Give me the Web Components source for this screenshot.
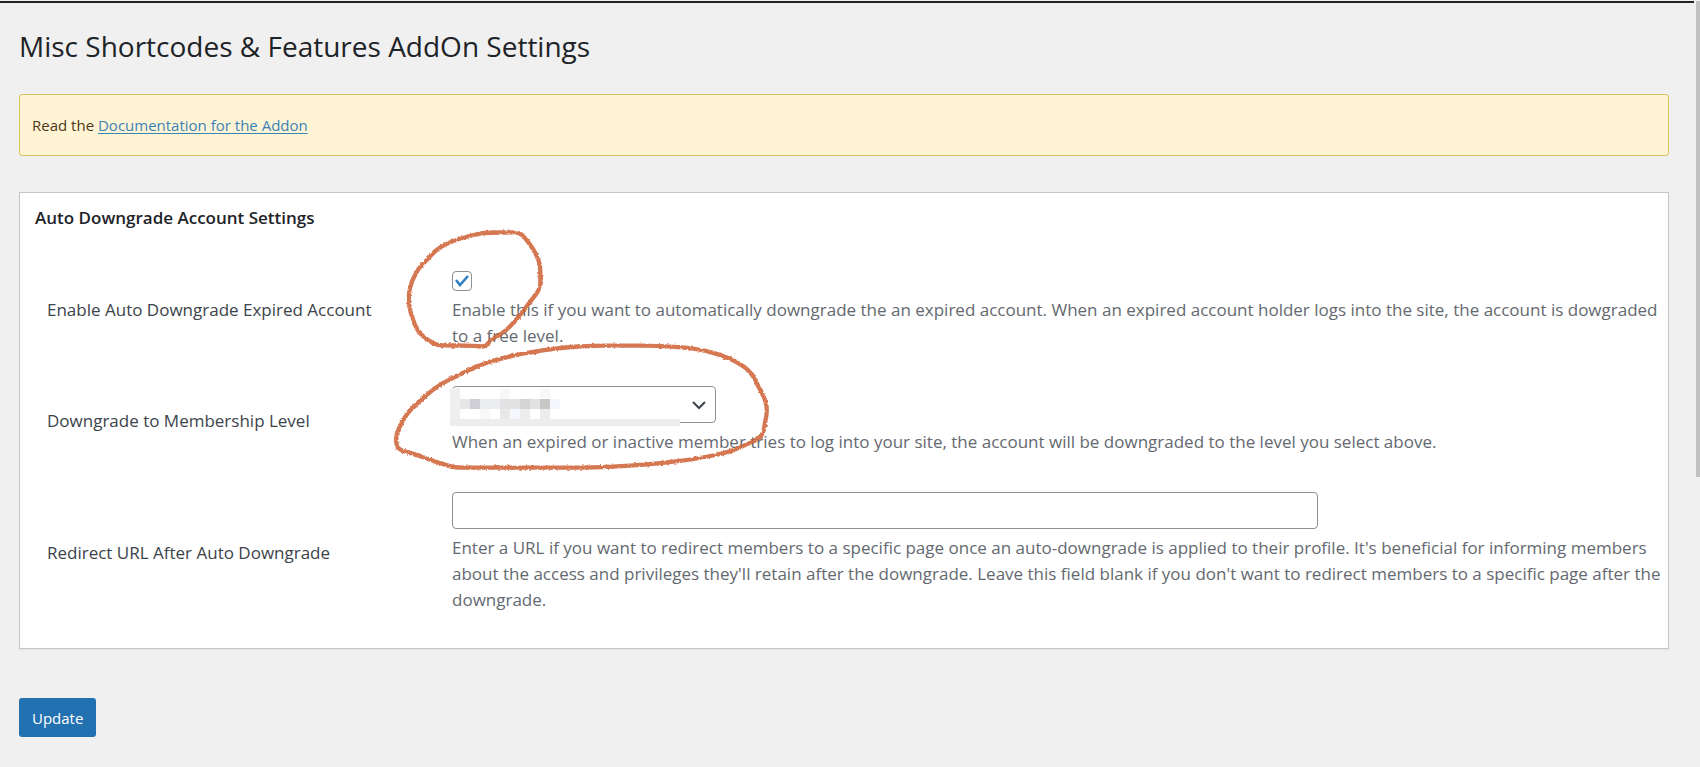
<!DOCTYPE html>
<html lang="en">
<head>
<meta charset="utf-8">
<title>Misc Shortcodes &amp; Features AddOn Settings</title>
<style>
body { margin: 0; background: #f0f0f0; font-family: "Open Sans", "Noto Sans", sans-serif; font-size: 17px; line-height: 26px; color: #3c434a; }
</style>
</head>
<body>
<settings-page heading="Misc Shortcodes &amp; Features AddOn Settings">
  <notice-bar>Read the <doc-link href="#documentation">Documentation for the Addon</doc-link></notice-bar>
  <settings-panel heading="Auto Downgrade Account Settings">
    <setting-row kind="checkbox" label="Enable Auto Downgrade Expired Account">Enable this if you want to automatically downgrade the an expired account. When an expired account holder logs into the site, the account is dowgraded to a free level.</setting-row>
    <setting-row kind="select" label="Downgrade to Membership Level">When an expired or inactive member tries to log into your site, the account will be downgraded to the level you select above.</setting-row>
    <setting-row kind="text" label="Redirect URL After Auto Downgrade">Enter a URL if you want to redirect members to a specific page once an auto-downgrade is applied to their profile. It's beneficial for informing members about the access and privileges they'll retain after the downgrade. Leave this field blank if you don't want to redirect members to a specific page after the downgrade.</setting-row>
  </settings-panel>
  <update-button slot="actions">Update</update-button>
</settings-page>
<script>
class BaseElement extends HTMLElement {
  connectedCallback() {
    if (!this.shadowRoot) this.attachShadow({ mode: "open" }).innerHTML = this.render();
  }
  attr(name) { return (this.getAttribute(name) || "").replace(/&/g, "&amp;").replace(/</g, "&lt;"); }
}

customElements.define("settings-page", class extends BaseElement {
  render() {
    return `<style>
      :host { display: block; position: relative; }
      .topbar { height: 2px; margin: 1px 6px 0 0; background: #1d2327; }
      .thumb { position: absolute; right: 0; top: 0; width: 4px; height: 476px; background: #c1c1c1; }
      main { padding: 25px 31px 30px 19px; }
      h1 { margin: 0 0 30px; font-size: 28px; line-height: 36px; font-weight: 400; color: #1d2327; }
      .actions { margin-top: 49px; }
    </style>
    <div class="topbar"></div><div class="thumb"></div>
    <main><h1>${this.attr("heading")}</h1><slot></slot><div class="actions"><slot name="actions"></slot></div></main>`;
  }
});

customElements.define("notice-bar", class extends BaseElement {
  render() {
    return `<style>
      :host { display: block; box-sizing: border-box; padding: 18px 12px; margin-bottom: 36px; background: #fff5d5; border: 1px solid #dcc05c; border-radius: 3px; font-size: 15px; line-height: 24px; color: #50371a; }
    </style><slot></slot>`;
  }
});

customElements.define("doc-link", class extends BaseElement {
  render() {
    return `<style>a { color: #3b82b8; text-underline-offset: 2px; }</style><a href="${this.attr("href")}"><slot></slot></a>`;
  }
});

customElements.define("settings-panel", class extends BaseElement {
  render() {
    return `<style>
      :host { display: block; background: #fff; border: 1px solid #c3c4c7; box-shadow: 0 1px 1px #0000000a; padding: 12px 0 35px; }
      h2 { margin: 0 15px 40px; font-size: 17px; line-height: 26px; font-weight: 600; color: #1d2327; }
      .rows { display: flex; flex-direction: column; gap: 37px; }
    </style><h2>${this.attr("heading")}</h2><div class="rows"><slot></slot></div>`;
  }
});

// Closed curve through the midpoints of the given points, as one brush stroke.
function ring(style, width, height, viewBox, points) {
  const p = points.split(" ").map(s => s.split(",").map(Number));
  const mid = (a, b) => `${(a[0] + b[0]) / 2} ${(a[1] + b[1]) / 2}`;
  let d = `M${mid(p[p.length - 1], p[0])}`;
  p.forEach((pt, i) => { d += `Q${pt[0]} ${pt[1]} ${mid(pt, p[(i + 1) % p.length])}`; });
  return `<svg class="ring" aria-hidden="true" style="${style}" width="${width}" height="${height}" viewBox="${viewBox}">
    <filter id="brush" x="-5%" y="-5%" width="110%" height="110%"><feTurbulence type="fractalNoise" baseFrequency=".12" numOctaves="2" seed="4"/><feDisplacementMap in="SourceGraphic" scale="9" xChannelSelector="R" yChannelSelector="G"/></filter>
    <path d="${d}z" filter="url(#brush)"/></svg>`;
}

customElements.define("setting-row", class extends BaseElement {
  control() {
    const kind = this.getAttribute("kind");
    if (kind === "checkbox") return `<input id="field" type="checkbox" checked aria-describedby="help">` +
      ring("left:-47px;top:-43px", 140, 122, "75 28 420 366", "420,41 385,41 330,42 300,44 262,54 215,68 170,91 142,123 118,146 104,170 89,205 86,240 88,265 98,302 112,335 130,354 150,368 172,380 205,380 260,381 300,382 316,384 335,361 367,345 397,317 425,283 452,247 481,210 481,175 481,138 467,103 445,70");
    if (kind === "select") return `<div class="select"><select id="field" aria-describedby="help"><option></option></select>
      <svg class="chevron" width="14" height="10" viewBox="0 0 14 10"><path d="M1 2l6 6 6-6"/></svg>
      <svg class="mosaic" width="230" height="38" viewBox="0 0 230 38" shape-rendering="crispEdges">
        <path fill="#fff" d="M10 4h110v27H10z"/><path fill="#efefef" d="M0 0h10v38H0z"/><path fill="#ededee" d="M0 31h230v7H0z"/>
        <path fill="#e7e6e6" d="M10 11h10v10H10z"/><path fill="#cfced6" d="M20 11h10v10H20z"/><path fill="#ecedf0" d="M30 11h20v10H30z"/>
        <path fill="#e2e2e3" d="M50 11h20v10H50zM80 11h10v10H80z"/><path fill="#d4d4d4" d="M70 11h10v10H70z"/><path fill="#c6c6c6" d="M90 11h10v10H90z"/><path fill="#f4f8fd" d="M100 11h10v10h-10zM60 21h10v10H60z"/>
        <path fill="#f8f8f8" d="M50 1h10v10H50zM90 1h10v10H90zM30 21h10v10H30z"/><path fill="#e8e8e8" d="M50 21h10v10H50z"/><path fill="#ececec" d="M70 21h10v10H70zM90 21h10v10H90z"/>
      </svg></div>` +
      ring("left:-60px;top:-44px", 378, 130, "35 368 1134 390", "230,745 205,740 145,720 95,702 55,692 46,668 50,637 78,585 105,558 165,503 235,466 315,430 385,412 445,399 550,384 640,379 720,379 840,379 950,388 1020,406 1070,427 1112,458 1135,503 1155,540 1161,575 1153,615 1147,650 1110,670 1050,697 960,717 850,731 750,739 640,745 500,745 400,745 300,745");
    return `<input id="field" type="text" aria-describedby="help">`;
  }
  render() {
    return `<style>
      :host { display: grid; grid-template-columns: 405px minmax(0, 1fr); align-items: center; padding: 0 4px 0 27px; }
      .cell { position: relative; }
      p { margin: 0; padding-top: 6px; color: #646970; }
      input, select { display: block; box-sizing: border-box; margin: 0; border: 1px solid #8c8f94; border-radius: 4px; background: #fff; font: inherit; }
      input[type="text"] { width: 866px; max-width: 100%; height: 37px; padding: 0 10px; }
      input[type="checkbox"] { appearance: none; width: 20px; height: 20px; background: no-repeat center / 14px url("data:image/svg+xml,%3Csvg xmlns='http://www.w3.org/2000/svg' viewBox='0 0 14 14'%3E%3Cpath d='M1 6l4 5 8-9' fill='none' stroke='%23307fc4' stroke-width='2.6'/%3E%3C/svg%3E"); }
      .select { position: relative; width: 264px; }
      select { width: 100%; height: 37px; appearance: none; padding: 0 30px 0 10px; }
      svg { position: absolute; pointer-events: none; }
      .chevron { right: 10px; top: 14px; fill: none; stroke: #3c434a; stroke-width: 2; }
      .mosaic { left: -2px; top: 2px; }
      .ring { z-index: 1; fill: none; stroke: #cf6338; stroke-opacity: .87; stroke-width: 13; stroke-linejoin: round; overflow: visible; }
    </style>
    <label for="field">${this.attr("label")}</label><div class="cell">${this.control()}<p id="help"><slot></slot></p></div>`;
  }
});

customElements.define("update-button", class extends BaseElement {
  render() {
    return `<style>
      :host { display: block; }
      button { display: block; height: 39px; padding: 0 13px; border: 0; border-radius: 3px; background: #2271b1; color: #fff; font: inherit; font-size: 15px; }
    </style><button type="button"><slot></slot></button>`;
  }
});
</script>
</body>
</html>
